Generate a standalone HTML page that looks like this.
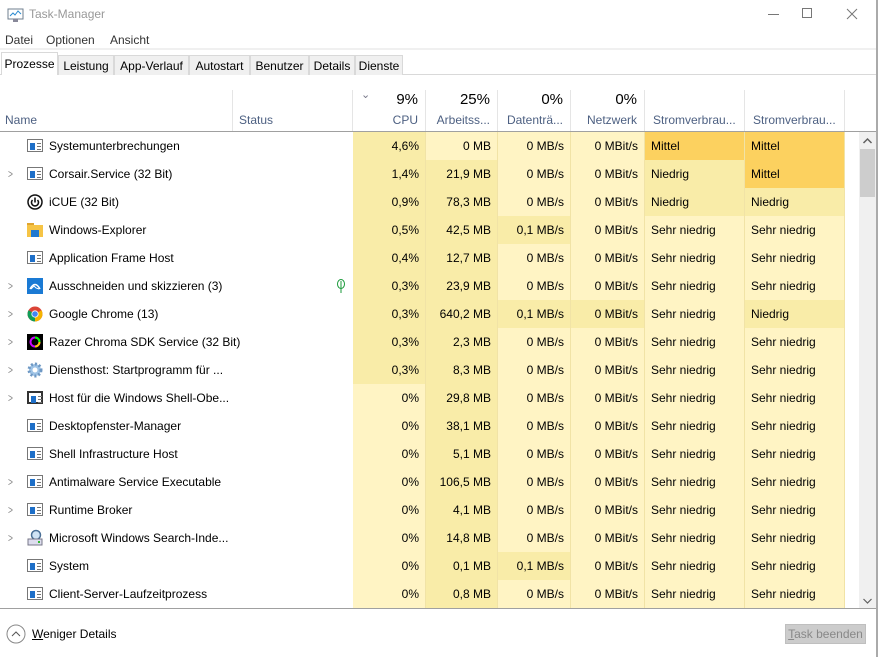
<!DOCTYPE html>
<html><head><meta charset="utf-8"><style>
*{box-sizing:border-box;margin:0;padding:0}
body{width:878px;height:657px;background:#fff;font-family:"Liberation Sans",sans-serif;font-size:12px;color:#000;position:relative;overflow:hidden}
.abs{position:absolute}
.title{left:29px;top:7px;font-size:12px;color:#999}
.menu{top:33px;color:#333}
.tab{position:absolute;top:55px;height:20px;background:#f0f0f0;border:1px solid #d9d9d9;border-bottom:none;padding:3px 0 0 0;text-align:center;font-size:12px}
.hd{position:absolute;top:90px;height:41px;border-right:1px solid #e5e5e5;text-align:right;padding-right:7px}
.hd .p{font-size:15px;color:#000;margin-top:1px;height:20px}
.hd .l{color:#4d6082;margin-top:2px}
.row{position:absolute;left:0;height:28px;width:858px}
.c{position:absolute;top:0;height:28px;line-height:28px;padding-right:6px;text-align:right;border-right:1px solid #f1e3a6;white-space:nowrap}
.L{background:#fff4c4}.D{background:#f9eca8}.O{background:#fcd15f}
.t{text-align:left;padding-left:6px}
.nm{position:absolute;left:49px;top:0;line-height:28px}
.ar{position:absolute;left:7px;top:0;line-height:28px;color:#888;font-size:12px;transform:scaleX(.7)}
.ic{position:absolute;left:27px;top:7px;width:16px;height:13px;border:1px solid #777;background:#fff}
.ic::before{content:"";position:absolute;left:2px;top:3px;width:5px;height:7px;background:#1e6fc8}
.ic::after{content:"";position:absolute;left:9px;top:3px;width:4px;height:1px;background:#777;box-shadow:0 3px #777,0 6px #777}
</style></head><body>
<svg class="abs" style="left:7px;top:8px" width="17" height="15"><rect x="1" y="1" width="15" height="10" fill="#fff" stroke="#6f7f8f"/><polyline points="3,8 6,5 8,7 11,3 14,6" fill="none" stroke="#2a8bd0"/><rect x="6" y="11" width="5" height="3" fill="#889"/></svg>
<div class="abs title">Task-Manager</div>
<div class="abs" style="left:768px;top:14px;width:11px;height:1px;background:#777"></div>
<div class="abs" style="left:802px;top:8px;width:10px;height:10px;border:1px solid #777"></div>
<svg class="abs" style="left:846px;top:8px" width="12" height="12"><path d="M1 1L11 11M11 1L1 11" stroke="#777"/></svg>
<div class="abs" style="left:876px;top:0;width:2px;height:657px;background:#aaa"></div>
<div class="abs menu" style="left:5px">Datei</div>
<div class="abs menu" style="left:46px">Optionen</div>
<div class="abs menu" style="left:110px">Ansicht</div>
<div class="abs" style="left:0;top:48px;width:876px;height:2px;background:#f0f0f0"></div>
<div class="abs" style="left:0;top:74px;width:876px;height:1px;background:#d9d9d9"></div>
<div class="tab" style="left:1px;top:52px;width:57px;height:23px;background:#fff;padding-top:4px">Prozesse</div>
<div class="tab" style="left:58px;width:56px">Leistung</div>
<div class="tab" style="left:114px;width:75px">App-Verlauf</div>
<div class="tab" style="left:189px;width:61px">Autostart</div>
<div class="tab" style="left:250px;width:59px">Benutzer</div>
<div class="tab" style="left:309px;width:46px">Details</div>
<div class="tab" style="left:355px;width:48px">Dienste</div>

<div class="abs" style="left:5px;top:113px;color:#4d6082">Name</div>
<div class="abs" style="left:232px;top:90px;height:41px;width:1px;background:#e5e5e5"></div>
<div class="abs" style="left:239px;top:113px;color:#4d6082">Status</div>
<div class="abs" style="left:352px;top:90px;height:41px;width:1px;background:#e5e5e5"></div>
<div class="abs" style="left:361px;top:88px;color:#778;font-size:11px">&#8964;</div>
<div class="hd" style="left:353px;width:73px"><div class="p">9%</div><div class="l">CPU</div></div>
<div class="hd" style="left:426px;width:72px"><div class="p">25%</div><div class="l">Arbeitss...</div></div>
<div class="hd" style="left:498px;width:73px"><div class="p">0%</div><div class="l">Datenträ...</div></div>
<div class="hd" style="left:571px;width:74px"><div class="p">0%</div><div class="l">Netzwerk</div></div>
<div class="hd" style="left:645px;width:100px;text-align:left;padding-left:8px"><div class="p"></div><div class="l">Stromverbrau...</div></div>
<div class="hd" style="left:745px;width:100px;text-align:left;padding-left:8px"><div class="p"></div><div class="l">Stromverbrau...</div></div>
<div class="abs" style="left:0;top:131px;width:876px;height:1px;background:#a0a0a0"></div>

<div class="abs" style="left:0;top:132px;width:860px;height:476px;overflow:hidden">
<div class="abs L" style="left:353px;top:0;width:492px;height:476px"></div>
<div class="row" style="top:0"><span class="ic"></span><span class="nm">Systemunterbrechungen</span><div class="c D" style="left:353px;width:73px">4,6%</div><div class="c L" style="left:426px;width:72px">0 MB</div><div class="c L" style="left:498px;width:73px">0 MB/s</div><div class="c L" style="left:571px;width:74px">0 MBit/s</div><div class="c O t" style="left:645px;width:100px">Mittel</div><div class="c O t" style="left:745px;width:100px">Mittel</div></div>
<div class="row" style="top:28px"><span class="ar">&gt;</span><span class="ic"></span><span class="nm">Corsair.Service (32 Bit)</span><div class="c D" style="left:353px;width:73px">1,4%</div><div class="c D" style="left:426px;width:72px">21,9 MB</div><div class="c L" style="left:498px;width:73px">0 MB/s</div><div class="c L" style="left:571px;width:74px">0 MBit/s</div><div class="c D t" style="left:645px;width:100px">Niedrig</div><div class="c O t" style="left:745px;width:100px">Mittel</div></div>
<div class="row" style="top:56px"><svg class="abs" style="left:27px;top:6px" width="16" height="16"><circle cx="8" cy="8" r="7" fill="#fff" stroke="#111" stroke-width="1.5"/><path d="M5.5 6A3.5 3.5 0 1 0 10.5 6M8 3.5V8.5" fill="none" stroke="#111" stroke-width="1.6"/></svg><span class="nm">iCUE (32 Bit)</span><div class="c D" style="left:353px;width:73px">0,9%</div><div class="c D" style="left:426px;width:72px">78,3 MB</div><div class="c L" style="left:498px;width:73px">0 MB/s</div><div class="c L" style="left:571px;width:74px">0 MBit/s</div><div class="c D t" style="left:645px;width:100px">Niedrig</div><div class="c D t" style="left:745px;width:100px">Niedrig</div></div>
<div class="row" style="top:84px"><svg class="abs" style="left:27px;top:7px" width="16" height="14"><rect x="0" y="0" width="7" height="3" fill="#e0a530"/><rect x="0" y="2" width="16" height="12" fill="#f6c445"/><rect x="4" y="7" width="8" height="7" fill="#1e78d0"/></svg><span class="nm">Windows-Explorer</span><div class="c D" style="left:353px;width:73px">0,5%</div><div class="c D" style="left:426px;width:72px">42,5 MB</div><div class="c D" style="left:498px;width:73px">0,1 MB/s</div><div class="c L" style="left:571px;width:74px">0 MBit/s</div><div class="c L t" style="left:645px;width:100px">Sehr niedrig</div><div class="c L t" style="left:745px;width:100px">Sehr niedrig</div></div>
<div class="row" style="top:112px"><span class="ic"></span><span class="nm">Application Frame Host</span><div class="c D" style="left:353px;width:73px">0,4%</div><div class="c D" style="left:426px;width:72px">12,7 MB</div><div class="c L" style="left:498px;width:73px">0 MB/s</div><div class="c L" style="left:571px;width:74px">0 MBit/s</div><div class="c L t" style="left:645px;width:100px">Sehr niedrig</div><div class="c L t" style="left:745px;width:100px">Sehr niedrig</div></div>
<div class="row" style="top:140px"><span class="ar">&gt;</span><svg class="abs" style="left:27px;top:6px" width="16" height="16"><rect width="16" height="16" fill="#1a7ad4"/><path d="M3 11Q8 2 13 11" fill="none" stroke="#fff" stroke-width="1.5"/><path d="M4 11L7 8 9 10 12 11" fill="none" stroke="#fff"/></svg><span class="nm">Ausschneiden und skizzieren (3)</span><svg class="abs" style="left:336px;top:7px" width="10" height="14"><ellipse cx="5" cy="5" rx="3.5" ry="4.5" fill="none" stroke="#1a9a3a"/><path d="M5 2V14" stroke="#1a9a3a"/></svg><div class="c D" style="left:353px;width:73px">0,3%</div><div class="c D" style="left:426px;width:72px">23,9 MB</div><div class="c L" style="left:498px;width:73px">0 MB/s</div><div class="c L" style="left:571px;width:74px">0 MBit/s</div><div class="c L t" style="left:645px;width:100px">Sehr niedrig</div><div class="c L t" style="left:745px;width:100px">Sehr niedrig</div></div>
<div class="row" style="top:168px"><span class="ar">&gt;</span><svg class="abs" style="left:27px;top:6px" width="16" height="16"><circle cx="8" cy="8" r="7.5" fill="#db4437"/><path d="M8 8L1.5 4.3A7.5 7.5 0 0 0 8 15.5Z" fill="#0f9d58"/><path d="M8 8L8 15.5A7.5 7.5 0 0 0 14.5 4.3Z" fill="#f4b400"/><circle cx="8" cy="8" r="3.6" fill="#fff"/><circle cx="8" cy="8" r="2.8" fill="#4285f4"/></svg><span class="nm">Google Chrome (13)</span><div class="c D" style="left:353px;width:73px">0,3%</div><div class="c D" style="left:426px;width:72px">640,2 MB</div><div class="c D" style="left:498px;width:73px">0,1 MB/s</div><div class="c D" style="left:571px;width:74px">0 MBit/s</div><div class="c L t" style="left:645px;width:100px">Sehr niedrig</div><div class="c D t" style="left:745px;width:100px">Niedrig</div></div>
<div class="row" style="top:196px"><span class="ar">&gt;</span><svg class="abs" style="left:27px;top:6px" width="16" height="16"><rect width="16" height="16" fill="#000"/><circle cx="8" cy="8" r="4.5" fill="none" stroke="#c0f" stroke-width="2"/><path d="M8 3.5A4.5 4.5 0 0 1 12.5 8" fill="none" stroke="#0f0" stroke-width="2"/><path d="M12.5 8A4.5 4.5 0 0 1 8 12.5" fill="none" stroke="#fc0" stroke-width="2"/></svg><span class="nm">Razer Chroma SDK Service (32 Bit)</span><div class="c D" style="left:353px;width:73px">0,3%</div><div class="c D" style="left:426px;width:72px">2,3 MB</div><div class="c L" style="left:498px;width:73px">0 MB/s</div><div class="c L" style="left:571px;width:74px">0 MBit/s</div><div class="c L t" style="left:645px;width:100px">Sehr niedrig</div><div class="c L t" style="left:745px;width:100px">Sehr niedrig</div></div>
<div class="row" style="top:224px"><span class="ar">&gt;</span><svg class="abs" style="left:27px;top:6px" width="16" height="16"><circle cx="8" cy="8" r="6" fill="#9ec3e6" stroke="#6e98c4" stroke-width="3" stroke-dasharray="2 2"/><circle cx="8" cy="8" r="2.5" fill="#fff"/></svg><span class="nm">Diensthost: Startprogramm für ...</span><div class="c D" style="left:353px;width:73px">0,3%</div><div class="c D" style="left:426px;width:72px">8,3 MB</div><div class="c L" style="left:498px;width:73px">0 MB/s</div><div class="c L" style="left:571px;width:74px">0 MBit/s</div><div class="c L t" style="left:645px;width:100px">Sehr niedrig</div><div class="c L t" style="left:745px;width:100px">Sehr niedrig</div></div>
<div class="row" style="top:252px"><span class="ar">&gt;</span><span class="ic" style="border-color:#333;border-width:2px"></span><span class="nm">Host für die Windows Shell-Obe...</span><div class="c L" style="left:353px;width:73px">0%</div><div class="c D" style="left:426px;width:72px">29,8 MB</div><div class="c L" style="left:498px;width:73px">0 MB/s</div><div class="c L" style="left:571px;width:74px">0 MBit/s</div><div class="c L t" style="left:645px;width:100px">Sehr niedrig</div><div class="c L t" style="left:745px;width:100px">Sehr niedrig</div></div>
<div class="row" style="top:280px"><span class="ic"></span><span class="nm">Desktopfenster-Manager</span><div class="c L" style="left:353px;width:73px">0%</div><div class="c D" style="left:426px;width:72px">38,1 MB</div><div class="c L" style="left:498px;width:73px">0 MB/s</div><div class="c L" style="left:571px;width:74px">0 MBit/s</div><div class="c L t" style="left:645px;width:100px">Sehr niedrig</div><div class="c L t" style="left:745px;width:100px">Sehr niedrig</div></div>
<div class="row" style="top:308px"><span class="ic"></span><span class="nm">Shell Infrastructure Host</span><div class="c L" style="left:353px;width:73px">0%</div><div class="c D" style="left:426px;width:72px">5,1 MB</div><div class="c L" style="left:498px;width:73px">0 MB/s</div><div class="c L" style="left:571px;width:74px">0 MBit/s</div><div class="c L t" style="left:645px;width:100px">Sehr niedrig</div><div class="c L t" style="left:745px;width:100px">Sehr niedrig</div></div>
<div class="row" style="top:336px"><span class="ar">&gt;</span><span class="ic"></span><span class="nm">Antimalware Service Executable</span><div class="c L" style="left:353px;width:73px">0%</div><div class="c D" style="left:426px;width:72px">106,5 MB</div><div class="c L" style="left:498px;width:73px">0 MB/s</div><div class="c L" style="left:571px;width:74px">0 MBit/s</div><div class="c L t" style="left:645px;width:100px">Sehr niedrig</div><div class="c L t" style="left:745px;width:100px">Sehr niedrig</div></div>
<div class="row" style="top:364px"><span class="ar">&gt;</span><span class="ic"></span><span class="nm">Runtime Broker</span><div class="c L" style="left:353px;width:73px">0%</div><div class="c D" style="left:426px;width:72px">4,1 MB</div><div class="c L" style="left:498px;width:73px">0 MB/s</div><div class="c L" style="left:571px;width:74px">0 MBit/s</div><div class="c L t" style="left:645px;width:100px">Sehr niedrig</div><div class="c L t" style="left:745px;width:100px">Sehr niedrig</div></div>
<div class="row" style="top:392px"><span class="ar">&gt;</span><svg class="abs" style="left:27px;top:5px" width="16" height="17"><circle cx="9" cy="6" r="4.5" fill="#cfe3f5" stroke="#4a6f96" stroke-width="1.5"/><rect x="1" y="10" width="14" height="6" fill="#dde" stroke="#778"/><rect x="11" y="12" width="2" height="2" fill="#3b3"/></svg><span class="nm">Microsoft Windows Search-Inde...</span><div class="c L" style="left:353px;width:73px">0%</div><div class="c D" style="left:426px;width:72px">14,8 MB</div><div class="c L" style="left:498px;width:73px">0 MB/s</div><div class="c L" style="left:571px;width:74px">0 MBit/s</div><div class="c L t" style="left:645px;width:100px">Sehr niedrig</div><div class="c L t" style="left:745px;width:100px">Sehr niedrig</div></div>
<div class="row" style="top:420px"><span class="ic"></span><span class="nm">System</span><div class="c L" style="left:353px;width:73px">0%</div><div class="c D" style="left:426px;width:72px">0,1 MB</div><div class="c D" style="left:498px;width:73px">0,1 MB/s</div><div class="c L" style="left:571px;width:74px">0 MBit/s</div><div class="c L t" style="left:645px;width:100px">Sehr niedrig</div><div class="c L t" style="left:745px;width:100px">Sehr niedrig</div></div>
<div class="row" style="top:448px"><span class="ic"></span><span class="nm">Client-Server-Laufzeitprozess</span><div class="c L" style="left:353px;width:73px">0%</div><div class="c D" style="left:426px;width:72px">0,8 MB</div><div class="c L" style="left:498px;width:73px">0 MB/s</div><div class="c L" style="left:571px;width:74px">0 MBit/s</div><div class="c L t" style="left:645px;width:100px">Sehr niedrig</div><div class="c L t" style="left:745px;width:100px">Sehr niedrig</div></div>
</div>

<div class="abs" style="left:859px;top:132px;width:17px;height:476px;background:#f0f0f0"></div>
<div class="abs" style="left:860px;top:149px;width:15px;height:48px;background:#cdcdcd"></div>
<svg class="abs" style="left:862px;top:137px" width="11" height="8"><path d="M1.5 6L5.5 2 9.5 6" fill="none" stroke="#606060" stroke-width="1.5"/></svg>
<svg class="abs" style="left:862px;top:597px" width="11" height="8"><path d="M1.5 2L5.5 6 9.5 2" fill="none" stroke="#606060" stroke-width="1.2"/></svg>
<div class="abs" style="left:0;top:608px;width:876px;height:1px;background:#a0a0a0"></div>
<svg class="abs" style="left:6px;top:624px" width="20" height="20"><circle cx="10" cy="10" r="9" fill="#fff" stroke="#888"/><path d="M6 12L10 8 14 12" fill="none" stroke="#555"/></svg>
<div class="abs" style="left:32px;top:627px;color:#000"><u>W</u>eniger Details</div>
<div class="abs" style="left:785px;top:624px;width:81px;height:20px;background:#ccc;border:1px solid #bfbfbf;color:#888;text-align:center;line-height:18px"><u>T</u>ask beenden</div>
</body></html>
